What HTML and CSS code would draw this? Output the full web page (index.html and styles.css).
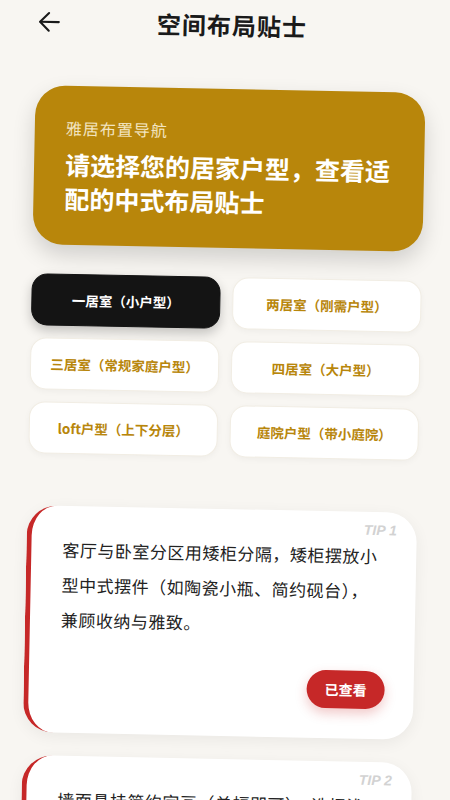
FILE: index.html
```html
<!DOCTYPE html>
<html lang="zh-CN">
<head>
    <meta charset="UTF-8">
    <meta name="viewport" content="width=device-width, initial-scale=1.0">
    <title>空间布局贴士</title>
    <link rel="stylesheet" href="styles.css">
</head>
<body>
    <div class="page">
        <header class="topbar">
            <button class="back" type="button" aria-label="返回">
                <svg viewBox="0 0 24 24" width="25" height="25" fill="none" stroke="#1a1a1a" stroke-width="2" stroke-linecap="round" stroke-linejoin="round">
                    <path d="M21 12H3.5"/>
                    <path d="M11.5 3.5L3 12l8.5 8.5"/>
                </svg>
            </button>
            <h1 class="title">空间布局贴士</h1>
            <span></span>
        </header>

        <section class="banner">
            <p class="banner-sub">雅居布置导航</p>
            <h2 class="banner-title">请选择您的居家户型，查看适<br>配的中式布局贴士</h2>
        </section>

        <div class="types">
            <button type="button" class="type active">一居室（小户型）</button>
            <button type="button" class="type">两居室（刚需户型）</button>
            <button type="button" class="type">三居室（常规家庭户型）</button>
            <button type="button" class="type">四居室（大户型）</button>
            <button type="button" class="type">loft户型（上下分层）</button>
            <button type="button" class="type">庭院户型（带小庭院）</button>
        </div>

        <div class="tips">
            <article class="tip">
                <div class="tip-no">TIP 1</div>
                <p class="tip-text">客厅与卧室分区用矮柜分隔，矮柜摆放小型中式摆件（如陶瓷小瓶、简约砚台），兼顾收纳与雅致。</p>
                <div class="tip-foot">
                    <button type="button" class="seen">已查看</button>
                </div>
            </article>
            <article class="tip">
                <div class="tip-no">TIP 2</div>
                <p class="tip-text">墙面悬挂简约字画（单幅即可），选择浅色系画框，与整体空间的留白相呼应，避免杂乱。</p>
                <div class="tip-foot">
                    <button type="button" class="seen">已查看</button>
                </div>
            </article>
        </div>
    </div>
</body>
</html>
```

FILE: styles.css
```css
html {
    background-color: #f8f6f2;
}
body {
    margin: 0;
    padding: 0;
    font-family: "Noto Sans CJK SC", "Noto Sans", sans-serif;
    color: #1a1a1a;
    background-color: #f8f6f2;
    overflow: hidden;
}
.page {
    padding: 0 30px 40px;
    transform: rotate(1.15deg);
    transform-origin: 225px 370px;
}
.topbar {
    display: grid;
    grid-template-columns: 1fr auto 1fr;
    align-items: center;
    height: 50px;
}
.back {
    display: flex;
    align-items: center;
    padding: 0;
    margin: 0;
    border: none;
    background: none;
    cursor: pointer;
}
.title {
    margin: 0;
    font-size: 24px;
    line-height: 32px;
    font-weight: 700;
    letter-spacing: 1px;
    color: #1a1a1a;
}
.banner {
    margin-top: 39px;
    padding: 32px 31px 30px;
    background-color: #b8860b;
    border-radius: 30px;
    box-shadow: 0 10px 22px rgba(0, 0, 0, 0.16);
}
.banner-sub {
    margin: 0;
    font-size: 16px;
    line-height: 20px;
    letter-spacing: 1px;
    color: #f3e5c2;
}
.banner-title {
    margin: 9px 0 0;
    font-size: 25px;
    line-height: 34px;
    font-weight: 700;
    color: #ffffff;
    white-space: nowrap;
}
.types {
    margin-top: 29px;
    display: grid;
    grid-template-columns: 1fr 1fr;
    gap: 12px;
}
.type {
    height: 52px;
    padding: 0 6px;
    border: 1px solid #f1ede4;
    border-radius: 16px;
    background-color: #ffffff;
    color: #b8860b;
    font-family: inherit;
    font-size: 13.5px;
    font-weight: 700;
    box-shadow: 0 2px 6px rgba(0, 0, 0, 0.04);
    cursor: pointer;
}
.type.active {
    background-color: #141414;
    border-color: #141414;
    color: #ffffff;
    box-shadow: 0 5px 12px rgba(0, 0, 0, 0.22);
}
.tips {
    margin-top: 52px;
}
.tip {
    margin-bottom: 23px;
    padding: 10px 20px 30px 31px;
    background-color: #ffffff;
    border-left: 5px solid #c62828;
    border-radius: 30px;
    box-shadow: 0 4px 16px rgba(0, 0, 0, 0.06);
}
.tip-no {
    text-align: right;
    font-family: "Liberation Sans", Arial, sans-serif;
    font-size: 14px;
    line-height: 16px;
    font-weight: 700;
    font-style: italic;
    color: #d2d2d2;
}
.tip-text {
    margin: 0 14px 0 0;
    font-size: 17px;
    line-height: 35px;
    letter-spacing: 0.5px;
    color: #222222;
}
.tip-foot {
    margin-top: 28px;
    text-align: right;
}
.seen {
    height: 38px;
    margin-right: 9px;
    padding: 0 18px;
    border: none;
    border-radius: 19px;
    background-color: #c62828;
    color: #ffffff;
    font-family: inherit;
    font-size: 14px;
    font-weight: 700;
    box-shadow: 0 5px 12px rgba(198, 40, 40, 0.25);
    cursor: pointer;
}
```
